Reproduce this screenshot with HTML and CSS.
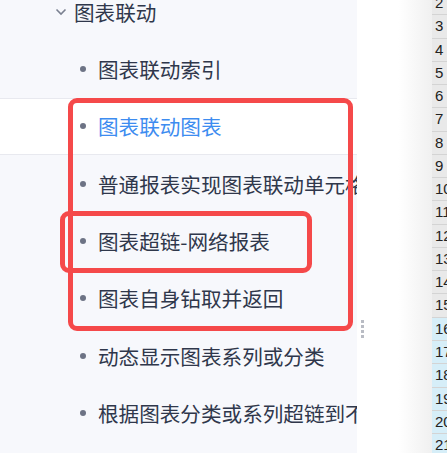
FILE: index.html
```html
<!DOCTYPE html>
<html>
<head>
<meta charset="utf-8">
<link rel="stylesheet" href="styles.css">
</head>
<body>
<div class="page">
  <aside class="sidebar">
    <div class="list">
      <div class="row header">
        <svg class="chev" width="12" height="8" viewBox="0 0 12 8"><path d="M1.5 1.5 L6 6 L10.5 1.5" fill="none" stroke="#7a8090" stroke-width="1.6"/></svg>
        <span>图表联动</span>
      </div>
      <div class="row item"><i class="dot"></i><span>图表联动索引</span></div>
      <div class="row item active"><i class="dot"></i><span>图表联动图表</span></div>
      <div class="row item"><i class="dot"></i><span>普通报表实现图表联动单元格</span></div>
      <div class="row item"><i class="dot"></i><span>图表超链-网络报表</span></div>
      <div class="row item"><i class="dot"></i><span>图表自身钻取并返回</span></div>
      <div class="row item"><i class="dot"></i><span>动态显示图表系列或分类</span></div>
      <div class="row item"><i class="dot"></i><span>根据图表分类或系列超链到不同报表</span></div>
    </div>
    <div class="mark mark-big"></div>
    <div class="mark mark-small"></div>
  </aside>
  <div class="gap">
    <div class="handle"><i></i><i></i><i></i><i></i></div>
  </div>
  <div class="sheet">
    <div class="cell">2</div>
    <div class="cell">3</div>
    <div class="cell">4</div>
    <div class="cell">5</div>
    <div class="cell">6</div>
    <div class="cell">7</div>
    <div class="cell">8</div>
    <div class="cell">9</div>
    <div class="cell">10</div>
    <div class="cell">11</div>
    <div class="cell">12</div>
    <div class="cell">13</div>
    <div class="cell">14</div>
    <div class="cell">15</div>
    <div class="cell sel">16</div>
    <div class="cell sel">17</div>
    <div class="cell sel">18</div>
    <div class="cell sel">19</div>
    <div class="cell sel">20</div>
    <div class="cell sel">21</div>
  </div>
</div>
</body>
</html>
```
FILE: styles.css
```css
html, body {
  margin: 0;
  padding: 0;
  background: #ffffff;
  overflow: hidden;
}
.page {
  display: flex;
  width: 447px;
  height: 453px;
  overflow: hidden;
}
.sidebar {
  position: relative;
  width: 357px;
  flex: none;
  height: 453px;
  background: #f7f8fc;
  overflow: hidden;
  font-family: "Noto Sans CJK SC", "Noto Sans", sans-serif;
}
.list {
  margin-top: -17px;
}
.row {
  height: 57.33px;
  display: flex;
  align-items: center;
  box-sizing: border-box;
  white-space: nowrap;
  font-size: 20.6px;
  color: #2f374b;
}
.header {
  padding-left: 55px;
}
.chev {
  margin-right: 7px;
  margin-top: 1px;
}
.item {
  padding-left: 80px;
}
.dot {
  width: 6px;
  height: 6px;
  border-radius: 50%;
  background: #6d7385;
  margin-right: 12px;
  flex: none;
}
.active {
  background: #ffffff;
  border-top: 1px solid #e8e9ef;
  border-bottom: 1px solid #e8e9ef;
  color: #3d8cf0;
}
.mark {
  position: absolute;
  border: 5px solid #f5494a;
  border-radius: 9px;
  box-sizing: border-box;
}
.mark-big {
  left: 68px;
  top: 98px;
  width: 285px;
  height: 233px;
}
.mark-small {
  left: 60px;
  top: 211px;
  width: 252px;
  height: 62px;
}
.gap {
  flex: 1;
  position: relative;
  background: linear-gradient(to right, #ffffff 0, #ffffff 55%, #f0f0f0 100%);
}
.handle {
  position: absolute;
  left: 4px;
  top: 320px;
  display: flex;
  flex-direction: column;
  gap: 2px;
}
.handle i {
  display: block;
  width: 3px;
  height: 3px;
  background: #b9bcc4;
}
.sheet {
  width: 15px;
  flex: none;
  margin-top: -8px;
  font-family: "Liberation Sans", sans-serif;
  font-size: 15px;
  color: #222;
}
.cell {
  height: 23.27px;
  box-sizing: border-box;
  border-bottom: 1px solid #d4d4d4;
  background: #e9e9e9;
  padding-left: 3px;
  line-height: 22px;
  white-space: nowrap;
}
.cell.sel {
  background: #d6eef8;
}
```
